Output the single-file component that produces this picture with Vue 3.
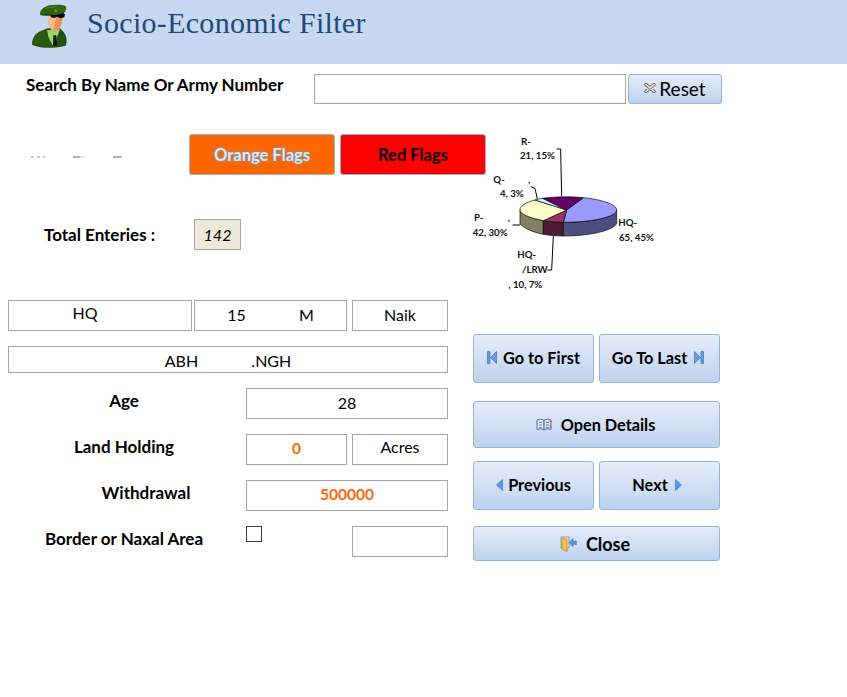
<script setup>
const infoRows = [
  { id: 'unit', text: 'HQ', cls: 'f-unit' },
  { id: 'num', text: '15             M', cls: 'f-num' },
  { id: 'rank', text: 'Naik', cls: 'f-rank' },
  { id: 'name', text: 'ABH             .NGH', cls: 'f-name' }
]

const chartLabels = [
  { x: 183, y: 60, t: 'R-' },
  { x: 180, y: 103, t: '21, 15%' },
  { x: 100, y: 175, t: 'Q-' },
  { x: 204, y: 175, t: ',' },
  { x: 120, y: 217, t: '4, 3%' },
  { x: 42, y: 287, t: 'P-' },
  { x: 143, y: 287, t: ',' },
  { x: 38, y: 332, t: '42, 30%' },
  { x: 475, y: 303, t: 'HQ-' },
  { x: 477, y: 347, t: '65, 45%' },
  { x: 172, y: 400, t: 'HQ-' },
  { x: 186, y: 443, t: '/LRW' },
  { x: 145, y: 488, t: ', 10, 7%' }
]
</script>

<template>
  <div class="page">
    <header class="head">
      <svg class="soldier" viewBox="0 0 150 156" width="50" height="52">
        <path d="M22 135c-2-20 8-35 28-43l18-7h37l10 10c10 10 13 30 7 42-32 9-72 9-100-2z" fill="#245010" />
        <path d="M30 104c4-4 12-8 22-12l4 10-18 10z" fill="#7c7c24" />
        <path d="M50 92l16 0 14 46c-20 1-40 0-58-3-2-18 10-35 28-43z" fill="#2a5a10" />
        <path d="M66 90l39-2-9 24-6 26h-6l-14-28z" fill="#9ad56a" />
        <path d="M85 106h9l2 32H84z" fill="#101808" />
        <path d="M72 45l40-3c2 23-4 43-17 50-13 3-23-7-27-27z" fill="#f8b78c" />
        <path d="M92 50l20-6c1 22-4 41-17 48-4 1-8 0-11-2 6-12 10-26 8-40z" fill="#f09058" />
        <path d="M46 45c-4-13 9-25 29-29 20-3 43-2 48 4 2 10-3 18-11 22l-40 4c-12 2-22 2-26-1z" fill="#2c6410" />
        <path d="M58 26c12-6 34-9 52-7-14 2-36 5-52 7z" fill="#4a8a26" />
        <circle cx="92" cy="32" r="3.500" fill="#a89428" />
        <path d="M60 42c20 4 40 2 58-4l-2 6c-16 4-38 4-56 2z" fill="#0e2606" />
        <path d="M76 46l44-4-2 10-12 3-10-5-8 4-10-2z" fill="#0a0a0a" />
      </svg>
      <h1 class="title">Socio-Economic Filter</h1>
    </header>

    <section class="search">
      <span class="search-label">Search By Name Or Army Number</span>
      <div class="box search-box"></div>
      <button class="btn reset">
        <svg viewBox="0 0 12 10" width="12" height="10">
          <path d="M2 1.500l8 7M10 1.500l-8 7" stroke="#6e6e6e" stroke-width="3.400" stroke-linecap="round" />
          <path d="M2 1.500l8 7M10 1.500l-8 7" stroke="#f0f0f0" stroke-width="1.500" stroke-linecap="round" />
        </svg>
        <span>Reset</span>
      </button>
    </section>

    <section class="top">
      <div class="top-left">
        <div class="flags">
          <div class="marks"><i class="m1"></i><i class="m2"></i><i class="m3"></i></div>
          <button class="flag orange">Orange Flags</button>
          <button class="flag red">Red Flags</button>
        </div>
        <div class="total">
          <span class="total-label">Total Enteries :</span>
          <span class="total-val">142</span>
        </div>
      </div>
      <svg class="chart" viewBox="0 0 630 525" width="210" height="175">
        <!-- sides -->
        <path d="M180 255v42c14 14 40 25 70 31v-41c-30-6-56-17-70-32z" fill="#808066" stroke="#000" stroke-width="2" />
        <path d="M250 287l60 5v41c-22 0-42-2-60-5z" fill="#4d1a33" stroke="#000" stroke-width="2" />
        <path d="M470 255v40c-10 22-80 38-160 38v-41c80 0 150-14 160-37z" fill="#4d4d80" stroke="#000" stroke-width="2" />
        <!-- top slices -->
        <path d="M320 255l50-37c56 6 100 20 100 37 0 20-70 37-160 37z" fill="#9999ff" stroke="#000" stroke-width="2" />
        <path d="M320 255l-10 37c-22 0-42-2-60-5z" fill="#993366" stroke="#000" stroke-width="2" />
        <path d="M320 255l-70 32c-40-8-70-19-70-32 0-12 18-23 45-30z" fill="#ffffcc" stroke="#000" stroke-width="2" />
        <path d="M320 255l-95-30c7-2 15-4 23-5z" fill="#ccffff" stroke="#000" stroke-width="2" />
        <path d="M320 255l-72-35c36-5 84-6 122-2z" fill="#660066" stroke="#000" stroke-width="2" />
        <!-- leaders -->
        <path d="M305 214L302 72H290M232 222l-7-32-13-5M180 300h-22M280 333l-5 102h-13" fill="none" stroke="#000" stroke-width="3" />
        <text v-for="l in chartLabels" :key="l.x + '-' + l.y" :x="l.x" :y="l.y" class="chart-text">{{ l.t }}</text>
      </svg>
    </section>

    <section class="bottom">
      <div class="form">
        <div v-for="r in infoRows" :key="r.id" class="box field" :class="r.cls">{{ r.text }}</div>

        <span class="lab l-age">Age</span>
        <div class="box field f-age">28</div>

        <span class="lab l-land">Land Holding</span>
        <div class="box field f-land orange-val">0</div>
        <div class="box field f-acres">Acres</div>

        <span class="lab l-with">Withdrawal</span>
        <div class="box field f-with orange-val">500000</div>

        <span class="lab l-border">Border or Naxal Area</span>
        <div class="check"></div>
        <div class="box field f-blank"></div>
      </div>

      <div class="actions">
        <div class="pair">
          <button class="btn act h49">
            <svg class="first-ic" viewBox="0 0 10 13" width="10" height="13"><path d="M.5 .5h2.500v12H.5z" fill="#6d9be0" stroke="#3f6fc0" stroke-width=".7" /><path d="M9.500 .5v12L3.500 6.500z" fill="#6d9be0" stroke="#3f6fc0" stroke-width=".7" /></svg>
            <span>Go to First</span>
          </button>
          <button class="btn act h49 nudge">
            <span>Go To Last</span>
            <svg class="gap-l" viewBox="0 0 10 13" width="10" height="13"><path d="M7 .5h2.500v12H7z" fill="#6d9be0" stroke="#3f6fc0" stroke-width=".7" /><path d="M.5 .5v12l6-6z" fill="#6d9be0" stroke="#3f6fc0" stroke-width=".7" /></svg>
          </button>
        </div>
        <button class="btn act open">
          <svg class="gap-r" viewBox="0 0 16 13" width="16" height="13">
            <path d="M1 2c2-1 5-1 7 .5V12c-2-1.500-5-1.500-7-.5z" fill="#e4ecf8" stroke="#4f6f9f" />
            <path d="M15 2c-2-1-5-1-7 .5V12c2-1.500 5-1.500 7-.5z" fill="#d6e2f4" stroke="#4f6f9f" />
            <path d="M3 4.500h3M3 7h3M3 9.500h3M10 4.500h3M10 7h3M10 9.500h3" stroke="#6f88b0" />
            <path d="M14.500 2.500v2" stroke="#d04a3a" stroke-width="1.500" /><path d="M14.500 5v2" stroke="#e0b030" stroke-width="1.500" /><path d="M14.500 7.500v2" stroke="#4a9a4a" stroke-width="1.500" />
          </svg>
          <span>Open Details</span>
        </button>
        <div class="pair prev-next">
          <button class="btn act h49">
            <svg class="gap-r2" viewBox="0 0 7 12" width="7" height="12"><path d="M6.500 .5v11L.5 6z" fill="#5f93e6" stroke="#3f6fc0" stroke-width=".6" /></svg>
            <span>Previous</span>
          </button>
          <button class="btn act h49 nudge-more">
            <span>Next</span>
            <svg class="gap-l" viewBox="0 0 7 12" width="7" height="12"><path d="M.5 .5v11L6.500 6z" fill="#5f93e6" stroke="#3f6fc0" stroke-width=".6" /></svg>
          </button>
        </div>
        <button class="btn act close">
          <svg class="gap-r3" viewBox="0 0 17 16" width="17" height="16">
            <path d="M1 1h8v11H1z" fill="#e8e4d8" stroke="#8c8878" stroke-width=".8" />
            <path d="M2 2l5 1.500v12L2 13z" fill="#f0c848" stroke="#a08030" stroke-width=".7" />
            <path d="M9 6.500l4-4v2.500h3.500v3.500H13v2.500z" fill="#5f8fe0" stroke="#3f6fc0" stroke-width=".5" />
          </svg>
          <span>Close</span>
        </button>
      </div>
    </section>
  </div>
</template>

<style scoped>
.page {
  width: 847px;
  height: 697px;
  overflow: hidden;
  background: #fff;
  font-family: Lato, "Liberation Sans", sans-serif;
  color: #000;
}

.head {
  height: 64px;
  background: #c6d9f1;
  display: flex;
  align-items: flex-start;
  padding-left: 25px;
  box-sizing: border-box;
}
.soldier {
  flex: none;
}
.title {
  margin: 4px 0 0 12px;
  font-family: "Liberation Serif", serif;
  font-weight: 400;
  font-size: 30px;
  line-height: 38px;
  color: #1f497d;
  letter-spacing: .3px;
}

.box {
  border: 1px solid #a6a6a6;
  box-sizing: border-box;
  background: #fff;
}

.btn {
  display: flex;
  align-items: center;
  justify-content: center;
  padding: 0;
  border: 1px solid #95b3d7;
  border-radius: 3px;
  background: linear-gradient(#e5edfa, #bdd2ee);
  font-family: inherit;
  color: #000;
}

.search {
  display: flex;
  align-items: flex-start;
  padding: 10px 0 0 26px;
  height: 40px;
  box-sizing: border-box;
}
.search-label {
  width: 288px;
  font-weight: 700;
  font-size: 17px;
  line-height: 22px;
  white-space: nowrap;
}
.search-box {
  width: 312px;
  height: 30px;
}
.reset {
  width: 94px;
  height: 30px;
  margin-left: 2px;
  padding-bottom: 2px;
  font-size: 19px;
  gap: 3px;
}

.top {
  display: flex;
  margin-top: 21px;
  height: 175px;
}
.top-left {
  width: 460px;
  flex: none;
}
.flags {
  display: flex;
  padding-top: 9px;
}
.marks {
  width: 189px;
  flex: none;
  position: relative;
}
.marks i {
  position: absolute;
  top: 22px;
  height: 2px;
}
.m1 {
  left: 31px;
  width: 14px;
  background: repeating-linear-gradient(90deg, #c8c8c8 0 3px, transparent 3px 6px);
}
.m2 {
  left: 73px;
  width: 11px;
  background: linear-gradient(90deg, #b4b4b4 60%, #e4e4e4 60%);
}
.m3 {
  left: 113px;
  width: 9px;
  background: #b0b0b0;
}
.flag {
  flex: none;
  width: 146px;
  height: 41px;
  border: 1px solid #95b3d7;
  border-radius: 3px;
  font-family: inherit;
  font-weight: 700;
  font-size: 16.500px;
  padding: 0;
}
.flag.red {
  margin-left: 5px;
  background: #ff0000;
  color: #000;
}
.flag.orange {
  background: #ff6600;
  color: #e8e8e8;
  text-shadow: 1px 1px 1px #8c8c9c, -1px 0 1px #8c8c9c, 0 -1px 1px #8c8c9c;
}
.total {
  display: flex;
  align-items: center;
  margin-top: 44px;
  padding-left: 44px;
}
.total-label {
  width: 150px;
  font-weight: 700;
  font-size: 17px;
}
.total-val {
  width: 47px;
  height: 31px;
  box-sizing: border-box;
  border: 1px solid #a6a6a6;
  background: #ece9d8;
  font-style: italic;
  font-size: 16px;
  line-height: 30px;
  text-align: center;
}
.chart {
  flex: none;
}
.chart-text {
  font-family: Lato, sans-serif;
  font-weight: 700;
  font-size: 29px;
  fill: #111;
}

.bottom {
  display: flex;
  align-items: flex-start;
  padding-left: 8px;
}
.form {
  display: grid;
  width: 440px;
  flex: none;
  grid-template-columns: 184px 2px 52px 101px 5px 96px;
  grid-template-rows: 31px 27px 31px 31px 31px 31px;
  row-gap: 15px;
}
.field {
  font-size: 16px;
  text-align: center;
  line-height: 27px;
}
.f-unit { grid-area: 1 / 1; padding-right: 30px; line-height: 24px; }
.f-num { grid-area: 1 / 3 / 1 / 5; white-space: pre; }
.f-rank { grid-area: 1 / 6; }
.f-name { grid-area: 2 / 1 / 2 / 7; white-space: pre; line-height: 28px; }
.f-age { grid-area: 3 / 4 / 3 / 7; }
.f-land { grid-area: 4 / 4; }
.f-acres { grid-area: 4 / 6; line-height: 24px; }
.f-with { grid-area: 5 / 4 / 5 / 7; }
.f-blank { grid-area: 6 / 6; }
.orange-val {
  color: #ff6600;
  font-weight: 700;
  font-size: 15.500px;
}
.lab {
  font-weight: 700;
  font-size: 17px;
  line-height: 18px;
  padding-top: 4px;
  text-align: center;
  padding-right: 6px;
}
.l-age { grid-area: 3 / 1 / 3 / 4; }
.l-land { grid-area: 4 / 1 / 4 / 4; }
.l-with { grid-area: 5 / 1 / 5 / 4; padding-right: 0; padding-left: 38px; }
.l-border { grid-area: 6 / 1 / 6 / 4; }
.check {
  grid-area: 6 / 4;
  width: 16px;
  height: 16px;
  box-sizing: border-box;
  border: 1px solid #404040;
  background: #fff;
}

.actions {
  width: 247px;
  margin: 34px 0 0 25px;
  flex: none;
  display: flex;
  flex-direction: column;
}
.pair {
  display: grid;
  grid-template-columns: 121px 121px;
  column-gap: 5px;
}
.act {
  font-weight: 700;
  font-size: 16.300px;
}
.h49 { height: 49px; padding-bottom: 2px; }
.first-ic { margin-right: 6px; }
.nudge { padding-right: 3px; }
.nudge-more { padding-right: 5px; }
.open {
  height: 47px;
  margin-top: 18px;
  padding-right: 2px;
}
.prev-next { margin-top: 13px; }
.close {
  height: 35px;
  margin-top: 16px;
  padding-right: 3px;
  font-size: 18px;
}
.gap-l { margin-left: 7px; }
.gap-r { margin-right: 9px; }
.gap-r2 { margin-right: 5px; }
.gap-r3 { margin-right: 9px; }
</style>

<style>
html, body {
  background: #fff;
}
</style>
